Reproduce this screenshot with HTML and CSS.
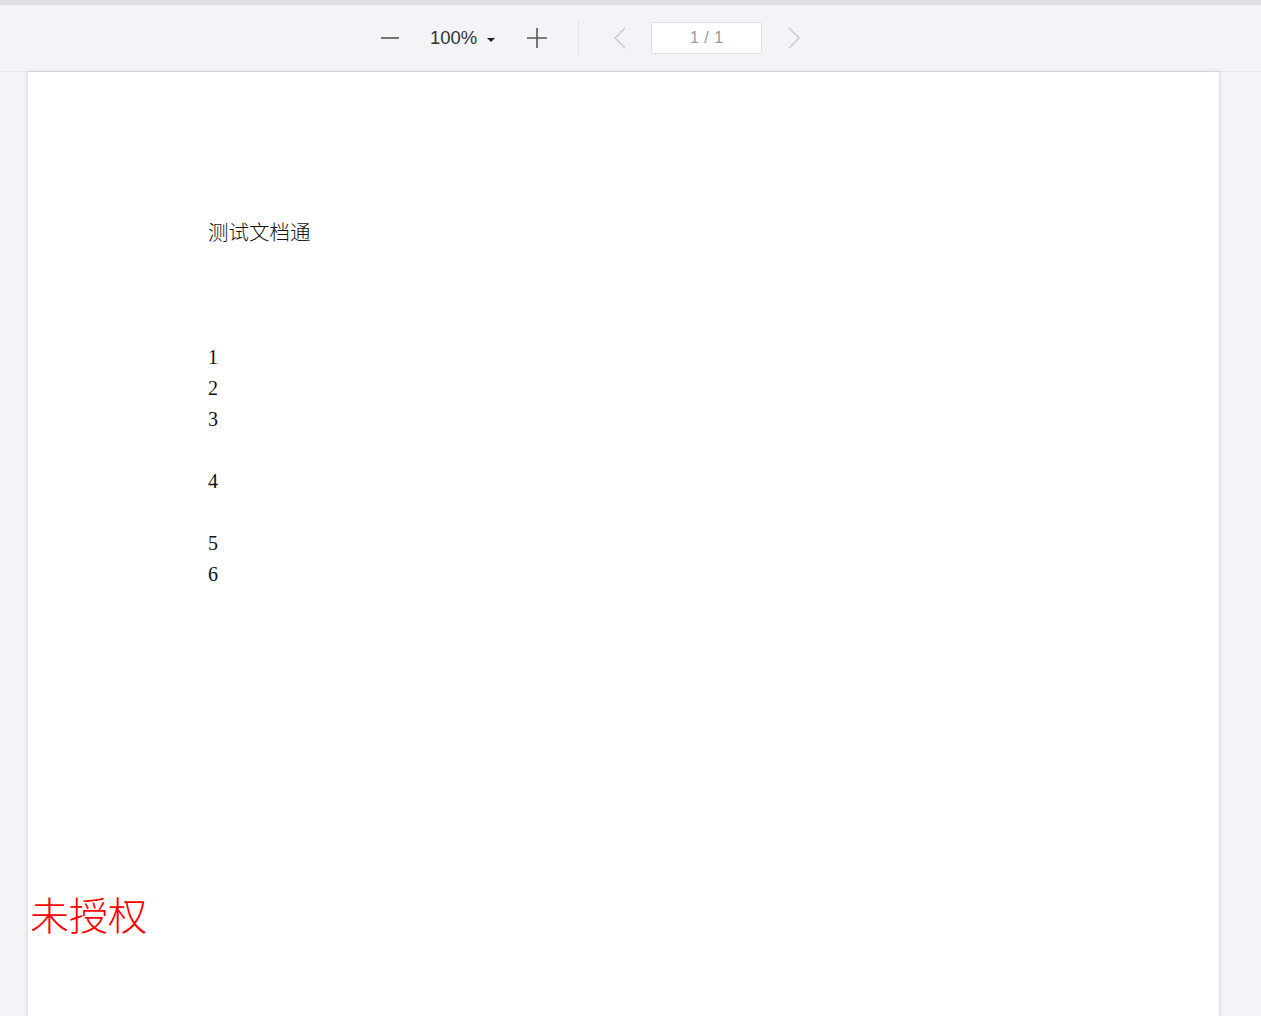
FILE: index.html
```html
<!DOCTYPE html>
<html lang="zh">
<head>
<meta charset="utf-8">
<title>文档预览</title>
<link rel="stylesheet" href="styles.css">
</head>
<body>
<div class="topstrip"></div>
<div class="toolbar">
  <div class="tools">
    <button class="icon-btn minus" aria-label="缩小">
      <svg width="20" height="20" viewBox="0 0 20 20"><path d="M1 10H19" stroke="#555" stroke-width="1.6"/></svg>
    </button>
    <div class="zoom">100%<span class="caret"></span></div>
    <button class="icon-btn plus" aria-label="放大">
      <svg width="22" height="22" viewBox="0 0 22 22"><path d="M1 11H21M11 1V21" stroke="#555" stroke-width="1.6"/></svg>
    </button>
    <div class="divider"></div>
    <button class="icon-btn prev" aria-label="上一页">
      <svg width="14" height="22" viewBox="0 0 14 22"><path d="M12 1L2 11L12 21" fill="none" stroke="#c4c7cc" stroke-width="1.4"/></svg>
    </button>
    <div class="pagebox">1 / 1</div>
    <button class="icon-btn next" aria-label="下一页">
      <svg width="14" height="22" viewBox="0 0 14 22"><path d="M2 1L12 11L2 21" fill="none" stroke="#c4c7cc" stroke-width="1.4"/></svg>
    </button>
  </div>
</div>
<div class="viewer">
  <div class="page">
    <div class="content">
      <p class="title">测试文档通</p>
      <div class="body-lines">
        <p class="line">1</p>
        <p class="line">2</p>
        <p class="line">3</p>
        <p class="line blank"></p>
        <p class="line">4</p>
        <p class="line blank"></p>
        <p class="line">5</p>
        <p class="line">6</p>
      </div>
    </div>
    <div class="watermark">未授权</div>
  </div>
</div>
</body>
</html>
```
FILE: styles.css
```css
html, body {
  margin: 0;
  padding: 0;
  height: 100%;
  overflow: hidden;
}
body {
  background: #f3f4f7;
  font-family: "Noto Sans", "Noto Sans CJK SC", sans-serif;
}
.topstrip {
  height: 5px;
  background: #dcdfe4;
}
.toolbar {
  height: 67px;
  background: #f3f4f7;
  border-bottom: 1px solid #e3e5e9;
  box-sizing: border-box;
  display: flex;
  align-items: center;
  padding-left: 380px;
}
.tools {
  display: flex;
  align-items: center;
}
.icon-btn {
  background: none;
  border: none;
  padding: 0;
  display: flex;
  align-items: center;
  justify-content: center;
  cursor: pointer;
}
.minus { width: 20px; }
.zoom {
  margin-left: 30px;
  font-family: "Liberation Sans", "Noto Sans CJK SC", sans-serif;
  font-size: 18.5px;
  color: #333;
  display: flex;
  align-items: center;
}
.caret {
  margin-left: 10px;
  width: 0;
  height: 0;
  border-left: 4px solid transparent;
  border-right: 4px solid transparent;
  border-top: 4px solid #222;
  margin-top: 3px;
}
.plus { margin-left: 31px; }
.divider {
  width: 1px;
  height: 35px;
  background: #e1e3e7;
  margin-left: 30px;
}
.prev { margin-left: 34px; }
.pagebox {
  margin-left: 24px;
  width: 111px;
  height: 32px;
  box-sizing: border-box;
  background: #fff;
  border: 1px solid #dcdfe4;
  border-radius: 3px;
  display: flex;
  align-items: center;
  justify-content: center;
  font-family: "Liberation Sans", sans-serif;
  font-size: 16px;
  color: #999;
  letter-spacing: 0.5px;
}
.next { margin-left: 25px; }
.viewer {
  display: flex;
  padding-left: 28px;
}
.page {
  width: 1191px;
  height: 1000px;
  background: #fff;
  box-shadow: 0 0 4px rgba(0,0,0,0.18);
  position: relative;
}
.content {
  padding: 144px 0 0 180px;
}
.content p {
  margin: 0;
}
.title {
  font-family: "Noto Sans CJK SC", sans-serif;
  font-weight: 300;
  font-size: 20.5px;
  line-height: 31px;
  color: #111;
  height: 31px;
}
.body-lines {
  padding-top: 95px;
}
.line {
  font-family: "Liberation Serif", serif;
  font-size: 20px;
  line-height: 31px;
  height: 31px;
  color: #111;
}
.watermark {
  position: absolute;
  left: 2px;
  top: 816px;
  font-family: "Noto Sans CJK SC", sans-serif;
  font-weight: 300;
  font-size: 39px;
  color: #f00;
  line-height: 50px;
}
```
